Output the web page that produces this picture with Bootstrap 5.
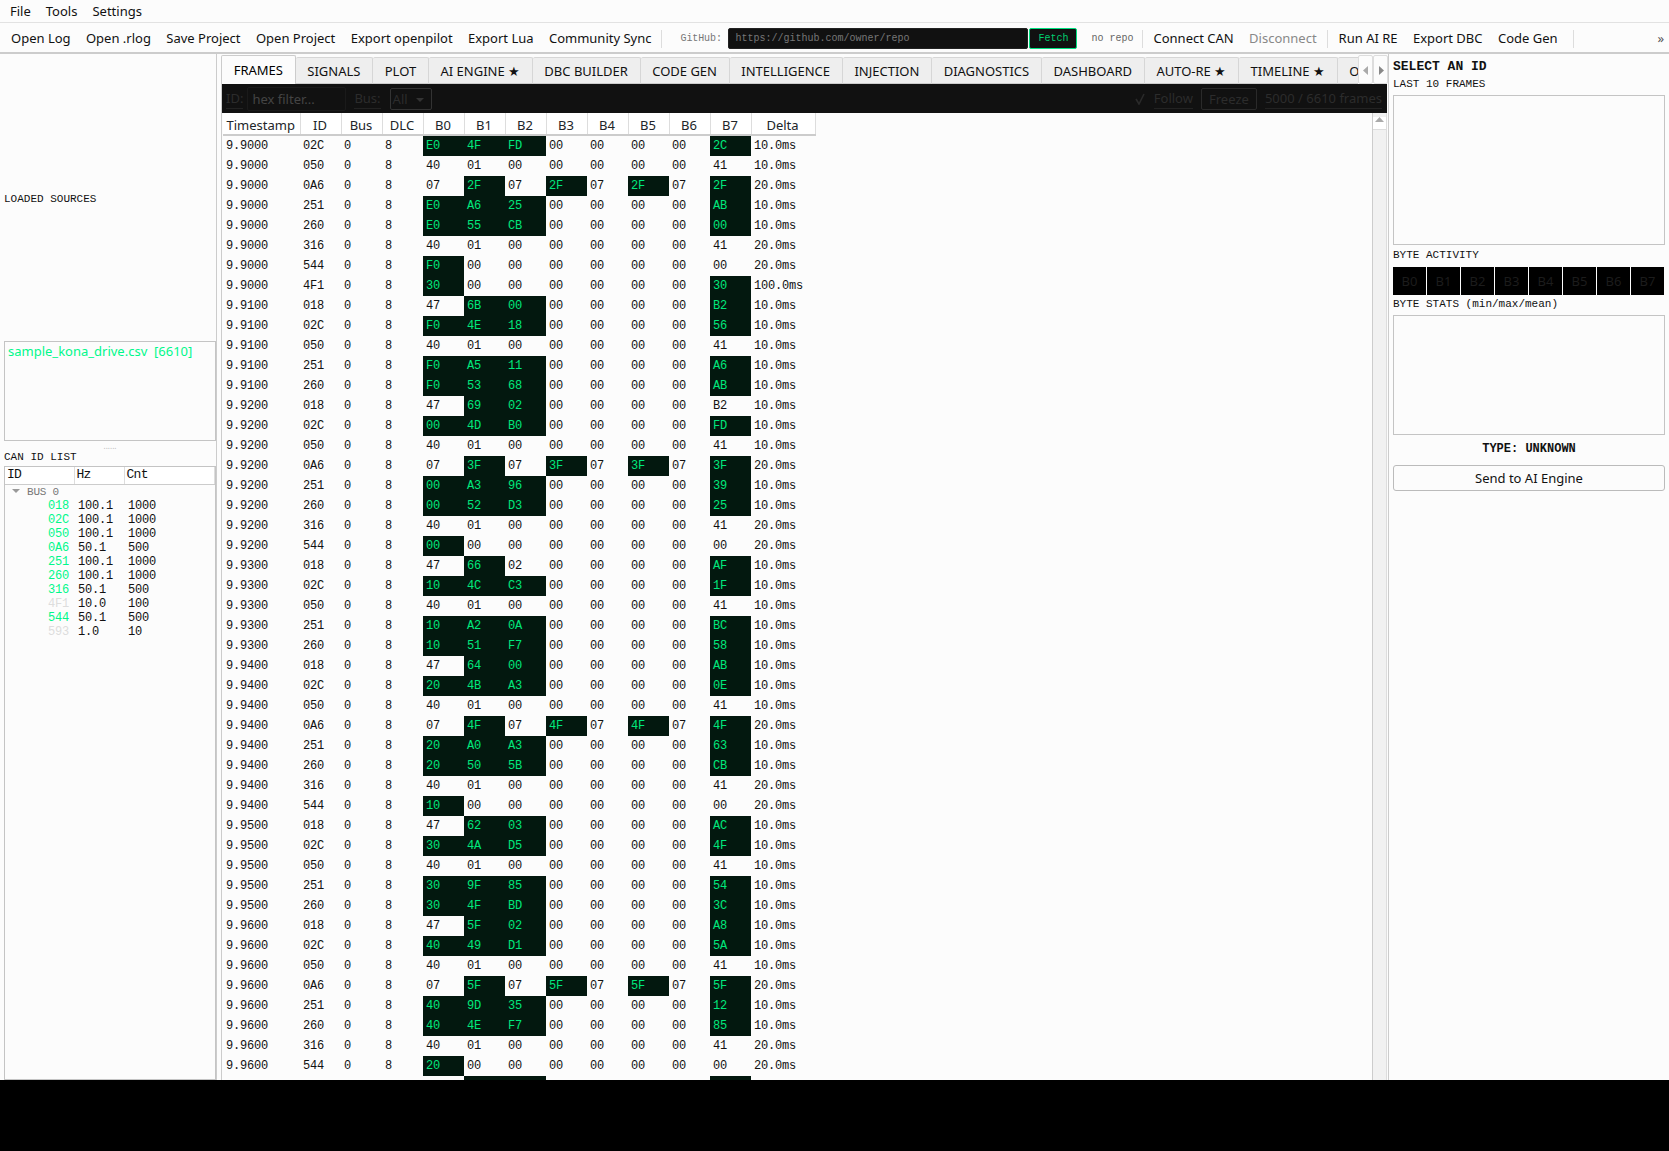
<!DOCTYPE html>
<html lang="en">
<head>
    <meta charset="UTF-8">
    <meta name="viewport" content="width=device-width, initial-scale=1.0">
    <title>CAN Frames</title>
    <link href="https://cdn.jsdelivr.net/npm/bootstrap@5.3.0/dist/css/bootstrap.min.css" rel="stylesheet">
    <style>
        html, body { height: 100%; }
        body { background: #000; font-family: "Noto Sans", sans-serif; font-size: 13px; color: #111; overflow: hidden; }
        .app-shell { height: 1080px; background: #fcfcfc; overflow: hidden; }
        .mono { font-family: "Liberation Mono", monospace; }

        .menu-strip { height: 23px; flex: none; padding-left: 10px; gap: 15px; border-bottom: 1px solid #e2e2e2; line-height: 22px; }
        .tool-strip { height: 31px; flex: none; padding: 2px 0 0 11px; border-bottom: 2px solid #ccc; white-space: nowrap; }
        .tool-link { margin-right: 15.4px; }
        .tool-off { color: #888; margin-right: 10px; }
        .tool-sep { width: 1px; height: 18px; flex: none; background: #ddd; margin-right: 11px; }
        .sync-link { margin-right: 10px; }
        .sep-wide { margin-right: 18px; }
        .gh-label { font-size: 10px; color: #777; margin-right: 2px; width: 46px; letter-spacing: -.1px; }
        .gh-input { width: 300px; height: 21px; background: #111; color: #777; font-size: 10px; padding: 0 6px; border: 1px solid #222; border-radius: 2px; line-height: 19px; }
        .gh-fetch { width: 48px; height: 21px; margin-left: 1px; background: #111; color: #00d070; font-size: 10px; border: 1px solid #00e080; border-radius: 2px; line-height: 19px; text-align: center; }
        .gh-state { font-size: 10px; color: #666; margin: 0 8px 0 14px; }
        .tool-more { position: absolute; right: 5px; top: 29px; color: #555; font-size: 13px; line-height: 18px; }

        .main-row { flex: 1 1 0; min-height: 0; }
        .left-side { width: 217px; flex: none; padding-left: 4px; border-right: 1px solid #ccc; }
        .side-label { font-size: 11px; line-height: 13px; }
        .source-box { height: 100px; border: 1px solid #c4c4c4; padding: 0 3px; color: #00f88a; white-space: pre; line-height: 18px; }
        .grip { height: 10px; color: #bbb; font-size: 8px; line-height: 9px; text-align: center; }
        .tree-box { flex: 1; border: 1px solid #c4c4c4; margin-top: 2px; font-size: 12px; letter-spacing: -.2px; }
        .tree-table { table-layout: fixed; width: 100%; margin: 0; }
        .tree-table th { font-weight: 400; height: 17px; padding: 0 0 0 2px; background: #fff; border-right: 1px solid #ddd; border-bottom: 1px solid #ccc; font-size: 13px; line-height: 16px; letter-spacing: -.7px; }
        .tree-table td { padding: 0 0 0 4px; line-height: 14px; height: 14px; }
        .bus-row td { color: #777; font-size: 11px; }
        .bus-arrow { display: inline-block; width: 0; height: 0; margin: 0 7px 2px 3px; border: 4px solid transparent; border-top: 4px solid #999; border-bottom: 0; }
        .tree-id { color: #00f88a; text-align: right; padding-right: 5px !important; }
        .tree-dim { color: #ddd; }

        .center-side { width: 1171px; flex: none; padding-left: 4px; }
        .tab-rail { height: 30px; flex: none; padding-top: 1px; }
        .tab-scroll { width: 1137px; overflow: hidden; flex: none; }
        .nav-tabs.frame-tabs { flex-wrap: nowrap; border: 0; height: 29px; align-items: flex-end; }
        .frame-tabs .nav-link { height: 27px; padding: 0 11.67px; line-height: 26px; color: #111; background: #eee; border: 1px solid #d6d6d6; border-bottom-color: #ccc; border-left-width: 0; border-radius: 2px 2px 0 0; white-space: nowrap; margin: 0; font-size: 13px; }
        .frame-tabs .nav-link.active { height: 29px; background: #fcfcfc; border-width: 1px 1px 0 1px; border-color: #ccc; line-height: 28px; padding-bottom: 0; }
        .tab-arrow { width: 15px; height: 29px; background: #fcfcfc; border: 1px solid #ddd; border-radius: 2px; }
        .tab-arrow svg { display: block; margin: 10px auto 0; }

        .frames-pane { flex: 1; min-height: 0; border-left: 1px solid #ccc; }
        .filter-strip { height: 29px; background: #111; color: #2c2c2c; padding-left: 4px; padding-right: 5px; flex: none; margin-right: 1px; white-space: nowrap; }
        .dark-label { border-bottom: 1px solid #222; line-height: 20px; }
        .dark-input { width: 99px; height: 24px; margin: 0 8px 0 4px; padding-left: 4px; border: 1px solid #1a1a1a; border-radius: 2px; color: #444; line-height: 22px; }
        .dark-select { width: 42px; height: 22px; margin-left: 9px; padding-left: 2px; border: 1px solid #333; border-radius: 2px; line-height: 20px; position: relative; }
        .dark-select::after { content: ""; position: absolute; right: 7px; top: 9px; border: 4px solid transparent; border-top-color: #333; border-bottom: 0; }
        .dark-check { margin-right: 8px; }
        .dark-btn { width: 56px; height: 22px; margin-right: 8px; border: 1px solid #2a2a2a; border-radius: 2px; text-align: center; line-height: 20px; }

        .frame-scroll { flex: 1; min-height: 0; overflow: hidden; }
        .frame-table { table-layout: fixed; width: 592px; margin: 0 0 0 1px; border-collapse: collapse; --bs-table-bg: transparent; }
        .frame-table th { height: 22px; padding: 3px 1px 0 0; font-weight: 400; text-align: center; background: #fff; border: 0; border-right: 1px solid #ddd; border-bottom: 2px solid #ccc; line-height: 17px; }
        .frame-table td { height: 20px; padding: 0 0 0 3px; border: 0; background: transparent; font-family: "Liberation Mono", monospace; font-size: 12px; letter-spacing: -.2px; line-height: 20px; color: #111; white-space: nowrap; }
        .frame-table td.hot { background: #03180f; color: #00e87c; }
        .fake-bar { width: 15px; flex: none; margin-right: 1px; background: #f1f1f1; border-left: 1px solid #ccc; border-right: 1px solid #ddd; }
        .fake-bar-up { height: 13px; margin-top: 2px; background: #fff; border-bottom: 1px solid #ddd; }
        .fake-bar-up svg { display: block; margin: 4px auto 0; }

        .right-side { width: 281px; flex: none; padding: 0 4px; border-left: 1px solid #ccc; }
        .detail-title { font-size: 13px; font-weight: 700; line-height: 15px; margin-top: 5px; }
        .detail-label { font-size: 11px; line-height: 13px; }
        .detail-box { border: 1px solid #c4c4c4; background: #fcfcfc; }
        .byte-cell { width: 33px; height: 28px; flex: none; background: #000; color: #1c1c1c; text-align: center; line-height: 28px; font-size: 13px; }
        .type-line { font-size: 12px; font-weight: 700; text-align: center; line-height: 15px; }
        .send-btn { height: 26px; padding: 0; font-size: 13px; color: #111; background: #fcfcfc; border: 1px solid #bbb; border-radius: 3px; line-height: 23px; }
    </style>
</head>
<body>

    <div class="app-shell d-flex flex-column">
        <div class="menu-strip d-flex">
            <span>File</span>
            <span>Tools</span>
            <span>Settings</span>
        </div>

        <div class="tool-strip d-flex align-items-center position-relative">
            <span class="tool-link">Open Log</span>
            <span class="tool-link">Open .rlog</span>
            <span class="tool-link">Save Project</span>
            <span class="tool-link">Open Project</span>
            <span class="tool-link">Export openpilot</span>
            <span class="tool-link">Export Lua</span>
            <span class="sync-link">Community Sync</span>
            <span class="tool-sep sep-wide"></span>
            <span class="gh-label mono">GitHub:</span>
            <span class="gh-input mono">https://github.com/owner/repo</span>
            <span class="gh-fetch mono">Fetch</span>
            <span class="gh-state mono">no repo</span>
            <span class="tool-sep"></span>
            <span class="tool-link">Connect CAN</span>
            <span class="tool-link tool-off">Disconnect</span>
            <span class="tool-sep"></span>
            <span class="tool-link">Run AI RE</span>
            <span class="tool-link">Export DBC</span>
            <span class="tool-link">Code Gen</span>
            <span class="tool-sep"></span>
        </div>
        <span class="tool-more">»</span>

        <div class="main-row d-flex">
            <div class="left-side d-flex flex-column">
                <div class="side-label mono" style="margin-top:139px">LOADED SOURCES</div>
                <div class="source-box" style="margin-top:135px">sample_kona_drive.csv  [6610]</div>
                <div class="grip">......</div>
                <div class="side-label mono">CAN ID LIST</div>
                <div class="tree-box mono">
                    <table class="tree-table">
                        <colgroup><col style="width:69px"><col style="width:50px"><col></colgroup>
                        <thead><tr><th>ID</th><th>Hz</th><th>Cnt</th></tr></thead>
                        <tbody id="treeRows"></tbody>
                    </table>
                </div>
            </div>

            <div class="center-side d-flex flex-column">
                <div class="tab-rail d-flex">
                    <div class="tab-scroll">
                        <ul class="nav nav-tabs frame-tabs">
                            <li class="nav-item"><a class="nav-link active">FRAMES</a></li>
                            <li class="nav-item"><a class="nav-link">SIGNALS</a></li>
                            <li class="nav-item"><a class="nav-link">PLOT</a></li>
                            <li class="nav-item"><a class="nav-link">AI ENGINE ★</a></li>
                            <li class="nav-item"><a class="nav-link">DBC BUILDER</a></li>
                            <li class="nav-item"><a class="nav-link">CODE GEN</a></li>
                            <li class="nav-item"><a class="nav-link">INTELLIGENCE</a></li>
                            <li class="nav-item"><a class="nav-link">INJECTION</a></li>
                            <li class="nav-item"><a class="nav-link">DIAGNOSTICS</a></li>
                            <li class="nav-item"><a class="nav-link">DASHBOARD</a></li>
                            <li class="nav-item"><a class="nav-link">AUTO-RE ★</a></li>
                            <li class="nav-item"><a class="nav-link">TIMELINE ★</a></li>
                            <li class="nav-item"><a class="nav-link">OVERVIEW</a></li>
                        </ul>
                    </div>
                    <div class="tab-arrow"><svg width="6" height="9" viewBox="0 0 6 9"><path d="M5 0v9L0 4.5z" fill="#aaa"/></svg></div>
                    <div class="tab-arrow"><svg width="6" height="9" viewBox="0 0 6 9"><path d="M1 0v9l5-4.5z" fill="#888"/></svg></div>
                </div>

                <div class="frames-pane d-flex flex-column">
                    <div class="filter-strip d-flex align-items-center">
                        <span class="dark-label">ID:</span>
                        <span class="dark-input">hex filter...</span>
                        <span class="dark-label">Bus:</span>
                        <span class="dark-select">All</span>
                        <span class="dark-check ms-auto"><svg width="12" height="12" viewBox="0 0 12 12"><path d="M2 6l3 5 5-10" fill="none" stroke="#2a2a2a" stroke-width="1.6"/></svg></span>
                        <span class="dark-label me-2">Follow</span>
                        <span class="dark-btn">Freeze</span>
                        <span class="dark-label">5000 / 6610 frames</span>
                    </div>
                    <div class="d-flex flex-grow-1" style="min-height:0">
                        <div class="frame-scroll">
                            <table class="table frame-table">
                                <colgroup>
                                    <col style="width:77px"><col style="width:41px"><col style="width:41px"><col style="width:41px">
                                    <col style="width:41px"><col style="width:41px"><col style="width:41px"><col style="width:41px">
                                    <col style="width:41px"><col style="width:41px"><col style="width:41px"><col style="width:41px">
                                    <col style="width:64px">
                                </colgroup>
                                <thead>
                                    <tr><th>Timestamp</th><th>ID</th><th>Bus</th><th>DLC</th><th>B0</th><th>B1</th><th>B2</th><th>B3</th><th>B4</th><th>B5</th><th>B6</th><th>B7</th><th>Delta</th></tr>
                                </thead>
                                <tbody id="frameRows"></tbody>
                            </table>
                        </div>
                        <div class="fake-bar">
                            <div class="fake-bar-up"><svg width="9" height="5" viewBox="0 0 9 5"><path d="M0 5h9L4.5 0z" fill="#aaa"/></svg></div>
                        </div>
                    </div>
                </div>
            </div>

            <div class="right-side d-flex flex-column">
                <div class="detail-title mono">SELECT AN ID</div>
                <div class="detail-label mono" style="margin-top:4px">LAST 10 FRAMES</div>
                <div class="detail-box" style="height:150px;margin-top:4px"></div>
                <div class="detail-label mono" style="margin-top:4px">BYTE ACTIVITY</div>
                <div class="d-flex" style="gap:1px;margin-top:5px" id="byteCells"></div>
                <div class="detail-label mono" style="margin-top:3px">BYTE STATS (min/max/mean)</div>
                <div class="detail-box" style="height:120px;margin-top:4px"></div>
                <div class="type-line mono" style="margin-top:7px">TYPE: UNKNOWN</div>
                <button class="btn send-btn" style="margin-top:8px">Send to AI Engine</button>
            </div>
        </div>
    </div>

    <script>
        // id, hz, count, dim
        const treeData = [
            ["018", "100.1", "1000"], ["02C", "100.1", "1000"], ["050", "100.1", "1000"], ["0A6", "50.1", "500"],
            ["251", "100.1", "1000"], ["260", "100.1", "1000"], ["316", "50.1", "500"], ["4F1", "10.0", "100", true],
            ["544", "50.1", "500"], ["593", "1.0", "10", true]
        ];
        let treeHtml = '<tr class="bus-row"><td colspan="3"><span class="bus-arrow"></span>BUS 0</td></tr>';
        treeData.forEach(r => {
            treeHtml += `<tr><td class="tree-id${r[3] ? " tree-dim" : ""}">${r[0]}</td><td>${r[1]}</td><td>${r[2]}</td></tr>`;
        });
        document.getElementById("treeRows").innerHTML = treeHtml;

        let cells = "";
        for (let i = 0; i < 8; i++) cells += `<div class="byte-cell">B${i}</div>`;
        document.getElementById("byteCells").innerHTML = cells;

        // a * after a byte marks a changed byte
        const frames = [
            "9.9000 02C E0* 4F* FD* 00 00 00 00 2C* 10.0",
            "9.9000 050 40 01 00 00 00 00 00 41 10.0",
            "9.9000 0A6 07 2F* 07 2F* 07 2F* 07 2F* 20.0",
            "9.9000 251 E0* A6* 25* 00 00 00 00 AB* 10.0",
            "9.9000 260 E0* 55* CB* 00 00 00 00 00* 10.0",
            "9.9000 316 40 01 00 00 00 00 00 41 20.0",
            "9.9000 544 F0* 00 00 00 00 00 00 00 20.0",
            "9.9000 4F1 30* 00 00 00 00 00 00 30* 100.0",
            "9.9100 018 47 6B* 00* 00 00 00 00 B2* 10.0",
            "9.9100 02C F0* 4E* 18* 00 00 00 00 56* 10.0",
            "9.9100 050 40 01 00 00 00 00 00 41 10.0",
            "9.9100 251 F0* A5* 11* 00 00 00 00 A6* 10.0",
            "9.9100 260 F0* 53* 68* 00 00 00 00 AB* 10.0",
            "9.9200 018 47 69* 02* 00 00 00 00 B2 10.0",
            "9.9200 02C 00* 4D* B0* 00 00 00 00 FD* 10.0",
            "9.9200 050 40 01 00 00 00 00 00 41 10.0",
            "9.9200 0A6 07 3F* 07 3F* 07 3F* 07 3F* 20.0",
            "9.9200 251 00* A3* 96* 00 00 00 00 39* 10.0",
            "9.9200 260 00* 52* D3* 00 00 00 00 25* 10.0",
            "9.9200 316 40 01 00 00 00 00 00 41 20.0",
            "9.9200 544 00* 00 00 00 00 00 00 00 20.0",
            "9.9300 018 47 66* 02 00 00 00 00 AF* 10.0",
            "9.9300 02C 10* 4C* C3* 00 00 00 00 1F* 10.0",
            "9.9300 050 40 01 00 00 00 00 00 41 10.0",
            "9.9300 251 10* A2* 0A* 00 00 00 00 BC* 10.0",
            "9.9300 260 10* 51* F7* 00 00 00 00 58* 10.0",
            "9.9400 018 47 64* 00* 00 00 00 00 AB* 10.0",
            "9.9400 02C 20* 4B* A3* 00 00 00 00 0E* 10.0",
            "9.9400 050 40 01 00 00 00 00 00 41 10.0",
            "9.9400 0A6 07 4F* 07 4F* 07 4F* 07 4F* 20.0",
            "9.9400 251 20* A0* A3* 00 00 00 00 63* 10.0",
            "9.9400 260 20* 50* 5B* 00 00 00 00 CB* 10.0",
            "9.9400 316 40 01 00 00 00 00 00 41 20.0",
            "9.9400 544 10* 00 00 00 00 00 00 00 20.0",
            "9.9500 018 47 62* 03* 00 00 00 00 AC* 10.0",
            "9.9500 02C 30* 4A* D5* 00 00 00 00 4F* 10.0",
            "9.9500 050 40 01 00 00 00 00 00 41 10.0",
            "9.9500 251 30* 9F* 85* 00 00 00 00 54* 10.0",
            "9.9500 260 30* 4F* BD* 00 00 00 00 3C* 10.0",
            "9.9600 018 47 5F* 02* 00 00 00 00 A8* 10.0",
            "9.9600 02C 40* 49* D1* 00 00 00 00 5A* 10.0",
            "9.9600 050 40 01 00 00 00 00 00 41 10.0",
            "9.9600 0A6 07 5F* 07 5F* 07 5F* 07 5F* 20.0",
            "9.9600 251 40* 9D* 35* 00 00 00 00 12* 10.0",
            "9.9600 260 40* 4E* F7* 00 00 00 00 85* 10.0",
            "9.9600 316 40 01 00 00 00 00 00 41 20.0",
            "9.9600 544 20* 00 00 00 00 00 00 00 20.0",
            "9.9700 018 47 5C* 01* 00 00 00 00 A2* 10.0"
        ];
        let rowHtml = "";
        frames.forEach(line => {
            const parts = line.split(" ");
            rowHtml += `<tr><td>${parts[0]}</td><td>${parts[1]}</td><td>0</td><td>8</td>`;
            parts.slice(2, 10).forEach(b => {
                const hot = b.endsWith("*");
                rowHtml += `<td${hot ? ' class="hot"' : ""}>${b.replace("*", "")}</td>`;
            });
            rowHtml += `<td>${parts[10]}ms</td></tr>`;
        });
        document.getElementById("frameRows").innerHTML = rowHtml;
    </script>

    <script src="https://cdn.jsdelivr.net/npm/bootstrap@5.3.0/dist/js/bootstrap.bundle.min.js"></script>

</body>
</html>
